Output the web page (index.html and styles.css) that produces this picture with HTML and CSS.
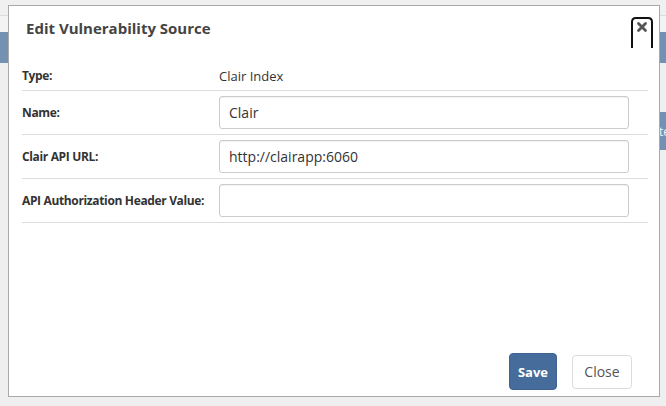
FILE: index.html
```html
<!DOCTYPE html>
<html lang="en">
<head>
<meta charset="utf-8">
<title>Edit Vulnerability Source</title>
<link rel="stylesheet" href="styles.css">
</head>
<body>
<div class="page">
  <div class="topbar"></div>
  <div class="subbar"></div>
  <div class="navbar"></div>
  <div class="toolbar"><span class="bg-btn">Create</span></div>
</div>
<div class="modal">
  <div class="modal-header">
    <h4 class="modal-title">Edit Vulnerability Source</h4>
    <button class="close-btn" type="button" aria-label="Close">
      <svg width="22" height="31" viewBox="0 0 22 31">
        <path d="M1 31 V5 Q1 1 5 1 H17 Q21 1 21 5 V31" fill="none" stroke="#111" stroke-width="2"/>
        <path d="M7.5 6.5 L14.5 13.5 M14.5 6.5 L7.5 13.5" stroke="#555" stroke-width="2.8" stroke-linecap="round"/>
      </svg>
    </button>
  </div>
  <div class="modal-body">
    <div class="row">
      <div class="label">Type:</div>
      <div class="value">Clair Index</div>
    </div>
    <div class="row">
      <div class="label">Name:</div>
      <div class="value"><input class="field" type="text" value="Clair"></div>
    </div>
    <div class="row">
      <div class="label">Clair API URL:</div>
      <div class="value"><input class="field" type="text" value="http://clairapp:6060"></div>
    </div>
    <div class="row">
      <div class="label">API Authorization Header Value:</div>
      <div class="value"><input class="field" type="text" value=""></div>
    </div>
  </div>
  <div class="modal-footer">
    <button class="btn btn-primary" type="button">Save</button>
    <button class="btn btn-default" type="button">Close</button>
  </div>
</div>
</body>
</html>
```
FILE: styles.css
```css
* { box-sizing: border-box; }
html, body { margin: 0; padding: 0; }
body {
  width: 666px;
  height: 406px;
  overflow: hidden;
  background: #efefef;
  font-family: "Open Sans", "Noto Sans", sans-serif;
  color: #333;
  position: relative;
}
.page { width: 666px; }
.topbar { height: 16px; background: #f0f0f0; border-bottom: 1px solid #dcdcdc; }
.subbar { height: 16px; background: #f3f3f3; }
.navbar { height: 31px; background: #7591b2; }
.toolbar {
  margin-top: 49px;
  display: flex;
  justify-content: flex-end;
}
.bg-btn {
  height: 38px;
  display: flex;
  align-items: center;
  background: #7591b2;
  color: #f4f6f9;
  font-size: 12px;
  padding: 0 12px;
  margin-right: -16px;
}

.modal {
  position: absolute;
  left: 8px;
  top: 5px;
  width: 652px;
  height: 392px;
  background: #fff;
  border: 1px solid #a9a9a9;
  display: flex;
  flex-direction: column;
}
.modal-header {
  height: 56px;
  display: flex;
  justify-content: space-between;
  align-items: flex-start;
  padding: 0 6px 0 17px;
}
.modal-title {
  margin: 12px 0 0;
  font-size: 15px;
  line-height: 20px;
  font-weight: 700;
  color: #444;
}
.close-btn {
  margin-top: 11px;
  padding: 0;
  border: 0;
  background: transparent;
  width: 22px;
  height: 31px;
  display: block;
}
.close-btn svg { display: block; }

.modal-body {
  padding: 0 11px 0 13px;
}
.row {
  display: flex;
  align-items: center;
  padding: 5px 0;
  border-bottom: 1px solid #ddd;
}
.label {
  width: 197px;
  flex: none;
  font-size: 12px;
  font-weight: 700;
  letter-spacing: -0.35px;
  color: #333;
  line-height: 18px;
}
.value {
  flex: 1;
  padding-right: 19px;
  font-size: 13px;
  line-height: 18px;
  color: #333;
}
.field {
  display: block;
  width: 100%;
  height: 33px;
  border: 1px solid #ccc;
  border-radius: 3px;
  padding: 0 9px;
  font-family: "Open Sans", "Noto Sans", sans-serif;
  font-size: 14px;
  color: #333;
  background: #fff;
  box-shadow: inset 0 1px 1px rgba(0,0,0,0.06);
  outline: none;
}

.modal-footer {
  margin-top: auto;
  display: flex;
  justify-content: flex-end;
  align-items: center;
  gap: 15px;
  padding: 0 27px 6px 0;
}
.btn {
  font-family: "Open Sans", "Noto Sans", sans-serif;
  border-radius: 4px;
  cursor: pointer;
}
.btn-primary {
  width: 48px;
  height: 37px;
  padding: 0;
  background: #466c9b;
  border: 1px solid #3f6290;
  color: #fff;
  font-size: 13px;
  font-weight: 700;
}
.btn-default {
  width: 60px;
  height: 34px;
  padding: 0;
  background: #fff;
  border: 1px solid #dcdcdc;
  color: #555;
  font-size: 14px;
}
```
